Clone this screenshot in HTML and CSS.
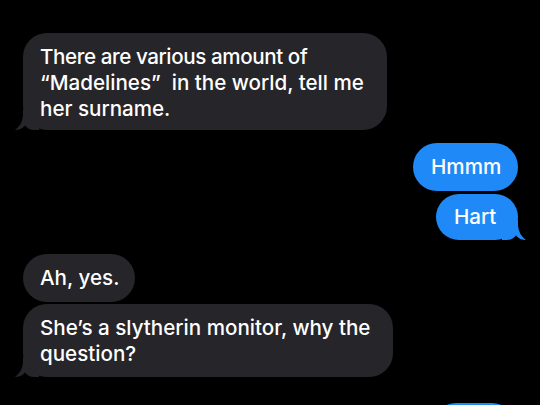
FILE: index.html
```html
<!DOCTYPE html>
<html>
<head>
<meta charset="utf-8">
<link rel="stylesheet" href="styles.css">
</head>
<body>
<div class="thread">
  <div class="bubble in b1">
    <span class="tight">There are various amount of</span><br><span>“Madelines”&nbsp; in the world, tell me</span><br><span>her surname.</span>
    <svg class="tail" viewBox="0 0 24 20" width="24" height="20"><path d="M8 0 L24 0 L24 20 L19 20 C15 20 12 18 10 15.5 C7.5 18.5 4 20 0 20 C4 17 8 12 8 4 Z"/></svg>
  </div>
  <div class="bubble out b2"><span>Hmmm</span></div>
  <div class="bubble out b3"><span>Hart</span>
    <svg class="tail" viewBox="0 0 24 20" width="24" height="20"><path d="M8 0 L24 0 L24 20 L19 20 C15 20 12 18 10 15.5 C7.5 18.5 4 20 0 20 C4 17 8 12 8 4 Z"/></svg>
  </div>
  <div class="bubble in b4"><span>Ah, yes.</span></div>
  <div class="bubble in b5"><span>She’s a slytherin monitor, why the<br>question?</span>
    <svg class="tail" viewBox="0 0 24 20" width="24" height="20"><path d="M8 0 L24 0 L24 20 L19 20 C15 20 12 18 10 15.5 C7.5 18.5 4 20 0 20 C4 17 8 12 8 4 Z"/></svg>
  </div>
  <div class="bubble out b6"></div>
</div>
</body>
</html>
```
FILE: styles.css
```css
html, body {
  margin: 0;
  padding: 0;
  background: #000;
}
.thread {
  display: flex;
  flex-direction: column;
  height: 405px;
  overflow: hidden;
  box-sizing: border-box;
  padding: 33px 22px 0 23px;
  font-family: Inter, "Noto Sans", sans-serif;
  font-size: 20.6px;
  font-weight: 500;
  line-height: 26px;
  color: #fff;
}
.bubble {
  position: relative;
  flex-shrink: 0;
  border-radius: 24px;
  box-sizing: border-box;
  white-space: nowrap;
}
.tight {
  letter-spacing: -0.4px;
}
.in {
  align-self: flex-start;
  background: #262529;
  padding: 11px 16px 10px 17px;
}
.in .tail {
  position: absolute;
  left: -8px;
  bottom: 0;
  fill: #262529;
}
.out {
  align-self: flex-end;
  background: #1f8af7;
  padding: 11px 17px 11px 18px;
}
.out .tail {
  position: absolute;
  right: -8px;
  bottom: 0;
  fill: #1f8af7;
  transform: scaleX(-1);
}
.b1 { width: 364px; height: 97px; }
.b2 { margin-top: 13px; width: 105px; height: 48px; }
.b3 { margin-top: 3px; width: 82px; height: 46px; padding-top: 10px; }
.b4 { margin-top: 14px; width: 112px; height: 48px; padding-top: 11px; }
.b5 { margin-top: 2px; width: 370px; height: 73px; }
.b6 { margin-top: 26px; width: 82px; height: 46px; margin-right: 3px; }
```
